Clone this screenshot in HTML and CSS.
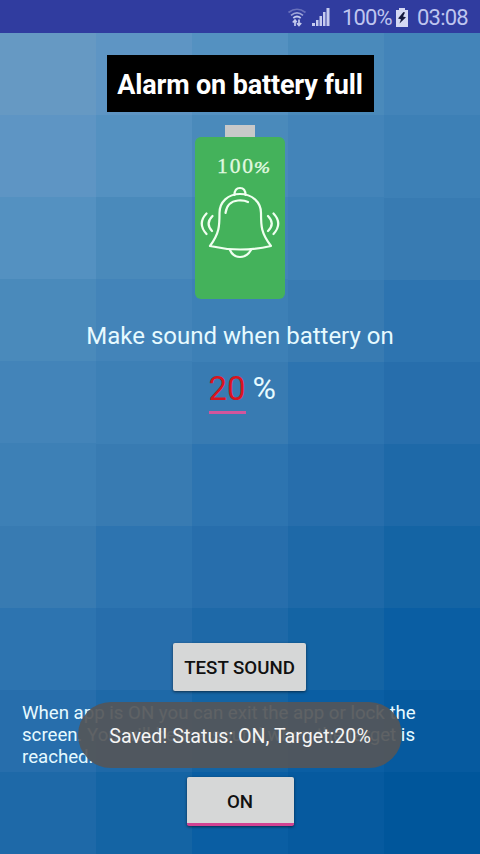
FILE: index.html
```html
<!DOCTYPE html>
<html lang="en">
<head>
<meta charset="utf-8">
<title>Alarm on battery full</title>
<link rel="stylesheet" href="styles.css">
</head>
<body>
<header class="status">
  <svg class="wifi" width="20" height="20" viewBox="0 0 20 20" fill="none" stroke="#c5cbee" stroke-width="1.700">
    <path d="M1.5 5.5Q10-1 18.500 5.500" stroke="#6870bb"/>
    <path d="M4 8.300Q10 3.500 16 8.300" stroke="#9ca3d7"/>
    <path d="M6.300 11Q10 8 13.700 11"/>
    <path d="M8 19v-6M5.800 15.500L8 13l1.700 2.300M12 12.500v6M10 16.200l2 2.300 2.200-2.500"/>
  </svg>
  <svg class="signal" width="18" height="18" viewBox="0 0 18 18" fill="#c5cbee">
    <path d="M0 18v-3h3v3zM4 18v-6h2.500v6zM7.500 18V8H10v10zM11 18V4h2.500v14zM14.500 18V0H17.500v18z"/>
  </svg>
  <span class="charge">100%</span>
  <svg class="cell" width="12" height="19" viewBox="0 0 12 19"><path d="M3 0h6v2h3v17H0V2h3z" fill="#d5d9f3"/><path d="M7.500 4L2 10.500l3 .7-1.500 4.300L10 9.300l-3-.8 2-4z" fill="#151a3c"/></svg>
  <span class="clock">03:08</span>
</header>
<main class="screen">
  <h1 class="title">Alarm on battery full</h1>
  <svg class="battery" width="92" height="175" viewBox="0 0 92 175">
    <rect x="31" y="0" width="30" height="13" fill="#c8c9c9"/>
    <rect x="1" y="12" width="90" height="162" rx="6" fill="#44b25b"/>
    <text class="level" x="23" y="47.500" textLength="36" lengthAdjust="spacing">100</text>
    <text class="percent-mark" x="60" y="47.500" textLength="16" lengthAdjust="spacingAndGlyphs">%</text>
    <g fill="none" stroke="#f0fff0" stroke-width="2.200" stroke-linecap="round" stroke-linejoin="round">
      <path d="M40.500 70Q40.500 63 46 63T51.500 70"/>
      <path d="M46 69C34 69 25.500 77 25.500 88C25.500 101 25.500 108 16 121Q46 128 77 121C67 108 67 101 67 88C67 77 58 69 46 69z"/>
      <path d="M31.500 88Q33 76.500 44 75.500Q50 75 54 77"/>
      <path d="M36 125Q39 132 46 132T57 125"/>
      <path d="M18.500 91Q11 98.500 18 106M12.500 88.500Q3 98.500 12.500 109M74 91Q81.500 98.500 74 106M79.500 88.500Q89 98.500 79.500 109"/>
    </g>
  </svg>
  <p class="prompt">Make sound when battery on</p>
  <div class="target"><span class="value">20</span><span class="unit">%</span></div>
  <button class="button test">TEST SOUND</button>
  <p class="help">When app is ON you can exit the app or lock the<br>screen. You will hear a sound when the target is<br>reached.</p>
  <button class="button toggle">ON</button>
</main>
<div class="toast">Saved! Status: ON, Target:20%</div>
</body>
</html>
```

FILE: styles.css
```css
* { box-sizing: border-box; }

:root {
  --bands: linear-gradient(to bottom,
    #6699c3 0 82.100px, #5e95c4 0 164.200px, #5491c1 0 246.300px,
    #4a8abb 0 328.400px, #4384b9 0 410.500px, #3d80b6 0 492.600px,
    #387bb2 0 574.700px, #2d74b0 0 656.800px, #276eac 0 738.900px,
    #1e69a8 0 821px, #1464a4 0 903.100px, #0a5ea3 0 985.200px,
    #065a9f 0 1067.300px, #00569b 0);
}

body {
  margin: 0;
  height: 854px;
  overflow: hidden;
  display: flex;
  flex-direction: column;
  font-family: Roboto, "Liberation Sans", sans-serif;
  color: #e6faff;
  background-image: var(--bands), var(--bands), var(--bands), var(--bands), var(--bands);
  background-size: 96px 1150px;
  background-repeat: no-repeat;
  background-position: 0 33px, 96px -49px, 192px -131px, 288px -213px, 384px -295px;
}

.status {
  height: 33px;
  flex: none;
  display: flex;
  align-items: center;
  justify-content: flex-end;
  padding: 1px 12px 0 0;
  background: #303c9f;
  color: #bec5ef;
  font-size: 22px;
}

.wifi { margin-right: 5px; }
.signal { margin-right: 12px; }
.charge { width: 50px; margin-right: 4px; letter-spacing: -0.9px; white-space: nowrap; }
.cell { margin-right: 9px; }
.clock { width: 51px; letter-spacing: -0.8px; white-space: nowrap; }

.screen {
  flex: 1;
  display: flex;
  flex-direction: column;
  align-items: center;
}

.title {
  margin: 22px 0 13px;
  width: 267px;
  height: 57px;
  line-height: 60px;
  text-align: center;
  background: #000;
  color: #fff;
  font-size: 27px;
  font-weight: 700;
  letter-spacing: -0.15px;
  white-space: nowrap;
}

.battery { flex: none; }
.level { font: 21.500px "Liberation Serif", serif; fill: #e1f9e0; stroke: #e1f9e0; stroke-width: 0.3px; }
.percent-mark { font: italic 17px "Liberation Serif", serif; fill: #e1f9e0; stroke: #e1f9e0; stroke-width: 0.4px; }

.prompt {
  margin: 20px 0 0;
  font-size: 24px;
  line-height: 32px;
  white-space: nowrap;
}

.target {
  display: flex;
  gap: 7px;
  height: 46px;
  margin: 16px 0 0 4px;
  font-size: 33px;
  line-height: 41px;
}

.value {
  width: 37px;
  height: 46px;
  color: #d9141f;
  border-bottom: 3px solid #d3559c;
  letter-spacing: -0.1px;
}

.unit { width: 23px; font-size: 32px; }

.button {
  border: 0;
  padding: 0;
  border-radius: 2px;
  background: #d6d7d7;
  color: #111;
  font: 500 18.700px Roboto, "Liberation Sans", sans-serif;
  box-shadow: 0 1px 3px rgba(0, 0, 0, 0.55);
}

.test { width: 133px; height: 48px; margin: 229px 1px 0 0; padding-top: 1px; }

.help {
  align-self: stretch;
  margin: 11px 0 9px 22px;
  font-size: 18.650px;
  line-height: 22px;
  white-space: nowrap;
}

.toggle { width: 107px; height: 49px; padding-top: 3px; border-bottom: 3px solid #d34291; }

.toast {
  position: absolute;
  left: 78px;
  top: 702px;
  width: 324px;
  height: 66px;
  border-radius: 33px;
  background: rgba(84, 86, 89, 0.93);
  color: #f5f5f5;
  font-size: 19.650px;
  line-height: 69px;
  text-align: center;
  white-space: nowrap;
}
```
